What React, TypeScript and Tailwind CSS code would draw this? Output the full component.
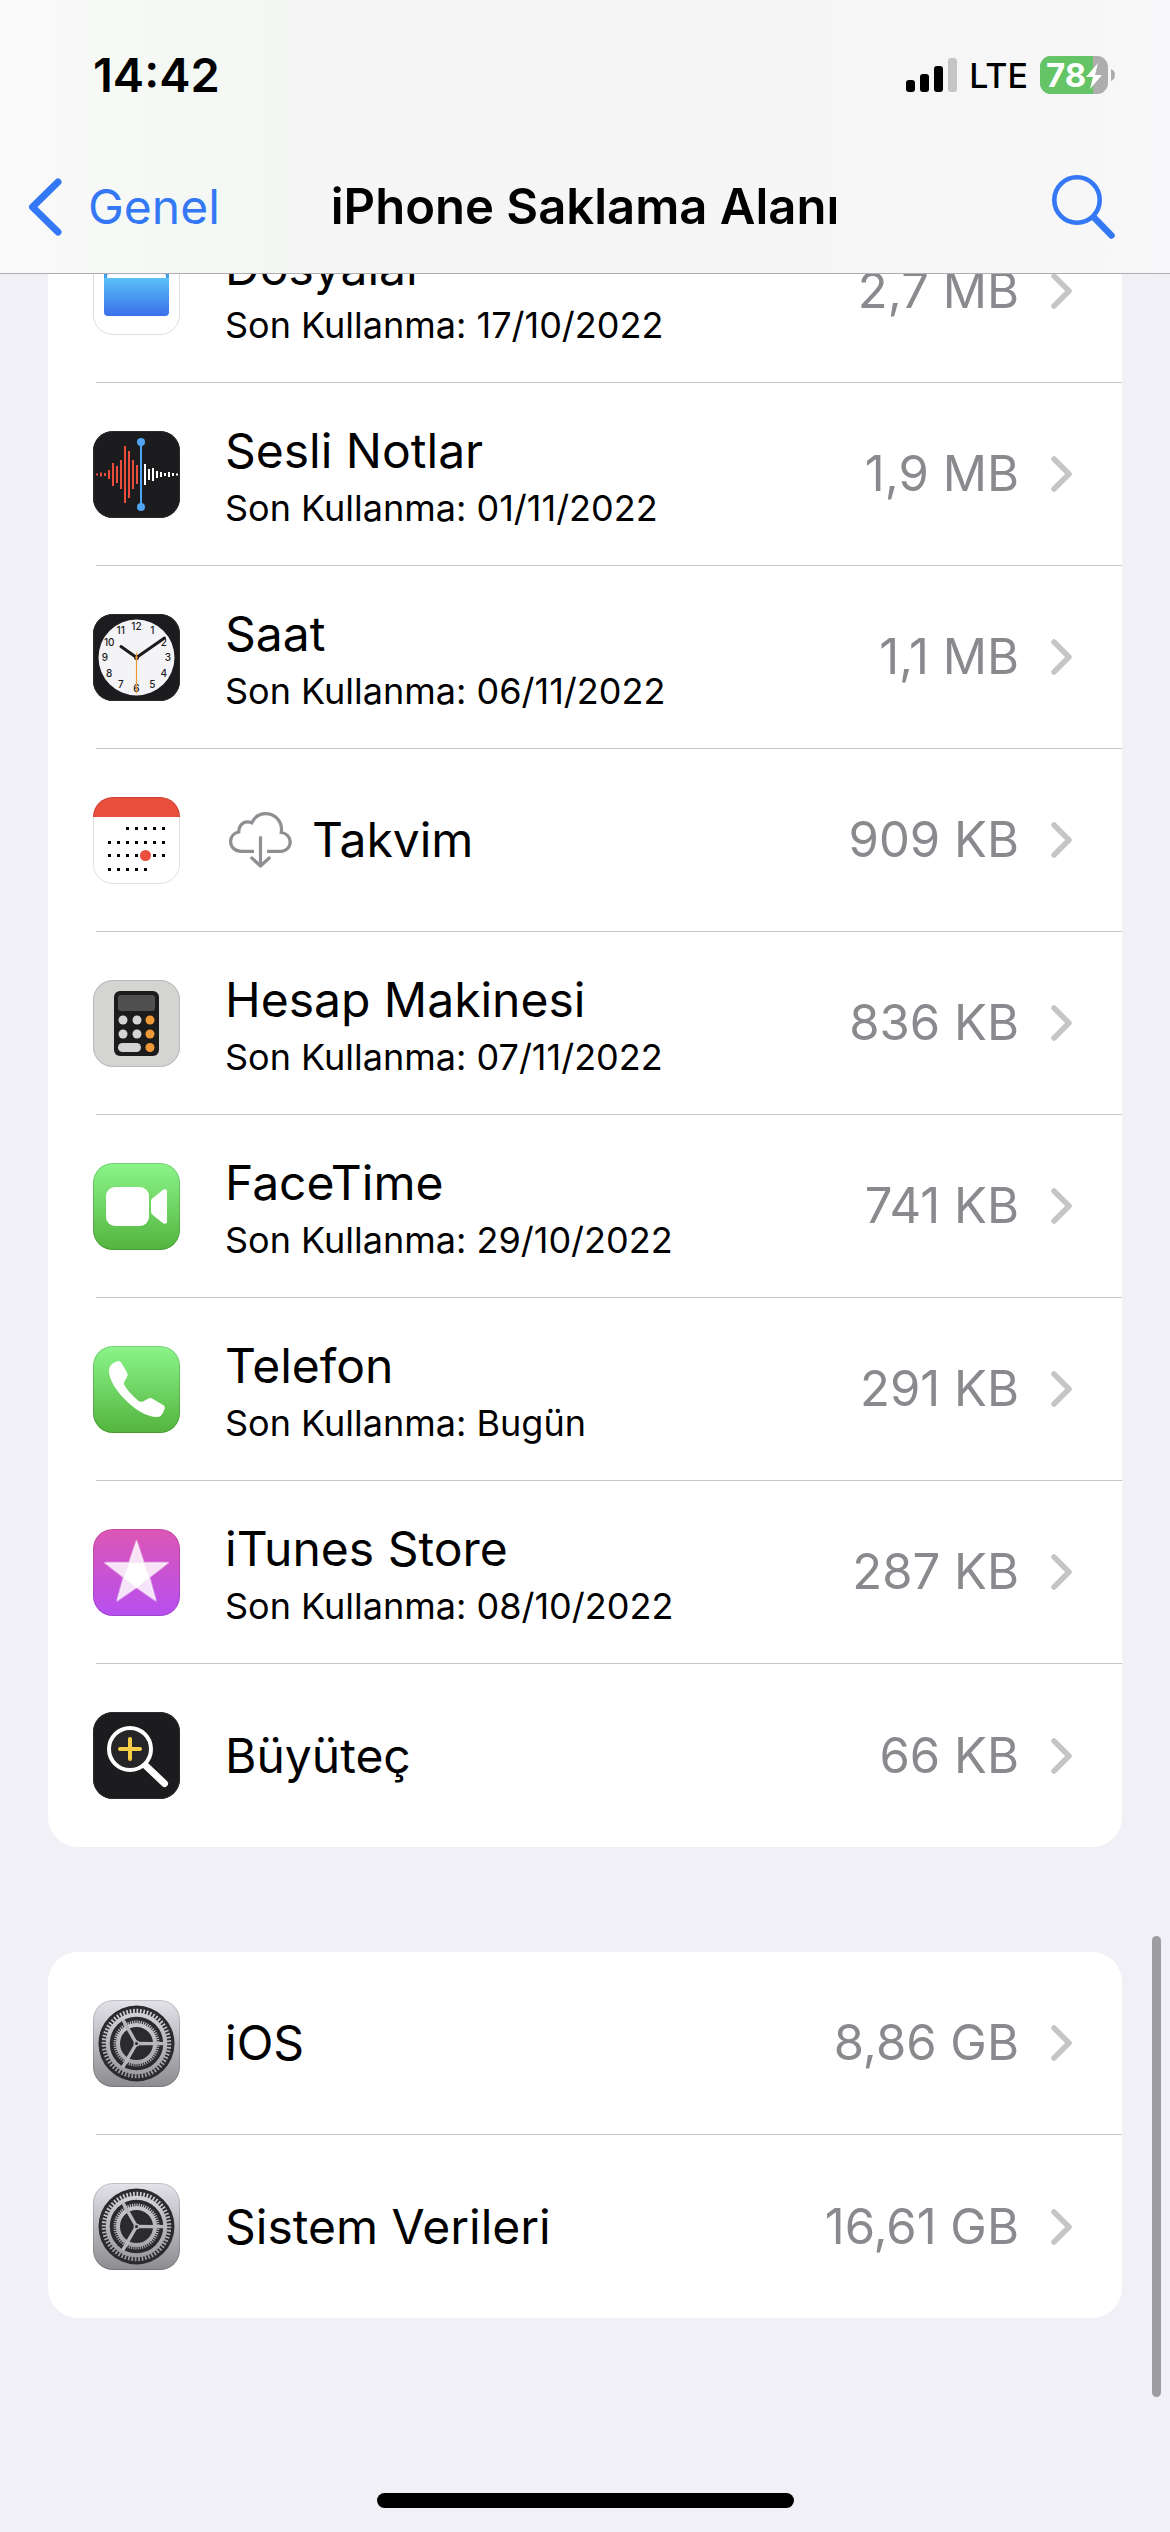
import React from "react";

type TileProps = {
  id: string;
  from: string;
  to: string;
  edge: string;
  children?: React.ReactNode;
};

type Item = {
  name: string;
  size: string;
  icon: React.ReactNode;
  used?: string;
  offloaded?: boolean;
};

const Tile = ({ children, id, from, to, edge }: TileProps) => (
  <svg viewBox="0 0 87 87" className="size-[87px] shrink-0" aria-hidden="true">
    <defs>
      <linearGradient id={`${id}-bg`} x1="0" y1="0" x2="0" y2="1">
        <stop offset="0" stopColor={from} />
        <stop offset="1" stopColor={to} />
      </linearGradient>
      <clipPath id={`${id}-clip`}>
        <rect width="87" height="87" rx="20" />
      </clipPath>
    </defs>
    <g clipPath={`url(#${id}-clip)`}>
      <rect width="87" height="87" fill={`url(#${id}-bg)`} />
      {children}
    </g>
    <rect x="0.5" y="0.5" width="86" height="86" rx="19.5" fill="none" stroke={edge} />
  </svg>
);

const FilesIcon = () => (
  <Tile id="files" from="#ffffff" to="#ffffff" edge="#dedee0">
    <defs>
      <linearGradient id="folder" x1="0" y1="0" x2="0" y2="1">
        <stop offset="0" stopColor="#5ac0f8" />
        <stop offset="1" stopColor="#3a70ea" />
      </linearGradient>
    </defs>
    <path d="M11 18h26l4 5h32a3 3 0 0 1 3 3v14H11z" fill="#3f9fe6" />
    <rect x="14" y="26" width="59" height="10" rx="2" fill="#fff" />
    <path d="M11 30h65v34a4 4 0 0 1-4 4H15a4 4 0 0 1-4-4z" fill="url(#folder)" />
  </Tile>
);

const wave = [2, 4, 3, 9, 23, 17, 29, 57, 47, 29, 19, 0, 21, 11, 13, 7, 5, 3, 5, 3, 2];

const VoiceMemosIcon = () => (
  <Tile id="memos" from="#1c1c1e" to="#1c1c1e" edge="#2a2a2c">
    {wave.map((h, i) => (
      <rect
        key={i}
        x={3 + i * 4}
        y={43.5 - h / 2}
        width="2"
        height={h}
        fill={i < 11 ? "#eb4d3d" : "#ffffff"}
      />
    ))}
    <path d="M48 11v65" stroke="#4fa4f3" strokeWidth="2" />
    <circle cx="48" cy="11" r="4" fill="#4fa4f3" />
    <circle cx="48" cy="76" r="4" fill="#4fa4f3" />
  </Tile>
);

const hours = [1, 2, 3, 4, 5, 6, 7, 8, 9, 10, 11, 12];

const ClockIcon = () => (
  <Tile id="clock" from="#1c1c1e" to="#1c1c1e" edge="#2a2a2c">
    <circle cx="43.5" cy="43.5" r="38" fill="#f4f4f6" />
    {hours.map((n) => (
      <text
        key={n}
        x={43.5 + 31.5 * Math.sin((n * Math.PI) / 6)}
        y={47 - 31 * Math.cos((n * Math.PI) / 6)}
        textAnchor="middle"
        fontSize="10"
        fontWeight="500"
        fill="#1c1c1e"
      >
        {n}
      </text>
    ))}
    <path d="M43.5 43.5 28 32.5M43.5 43.5 71.5 24" stroke="#1c1c1e" strokeWidth="3" strokeLinecap="round" />
    <circle cx="43.5" cy="43.5" r="2.5" fill="#1c1c1e" />
    <path d="M43.5 38.5v41" stroke="#f09a37" strokeWidth="1.2" />
    <circle cx="43.5" cy="43.5" r="1.3" fill="#f09a37" />
  </Tile>
);

const weeks = [
  { y: 31.5, from: 2, to: 6 },
  { y: 45.5, from: 0, to: 6 },
  { y: 58.5, from: 0, to: 6 },
  { y: 72.5, from: 0, to: 4 },
];

const CalendarIcon = () => (
  <Tile id="calendar" from="#ffffff" to="#ffffff" edge="#00000020">
    <rect width="87" height="20" fill="#ea4e3d" />
    {weeks.map((w) =>
      [0, 1, 2, 3, 4, 5, 6]
        .filter((d) => d >= w.from && d <= w.to)
        .map((d) => (
          <rect key={`${w.y}-${d}`} x={15 + d * 9} y={w.y - 1.5} width="3" height="3" fill="#000" />
        ))
    )}
    <circle cx="52.5" cy="58.5" r="5.5" fill="#ea4e3d" />
  </Tile>
);

const CalculatorIcon = () => (
  <Tile id="calculator" from="#d4d4d2" to="#d4d4d2" edge="#b9b9b8">
    <rect x="21" y="11" width="45" height="65" rx="6" fill="#1c1c1c" />
    <rect x="25" y="15" width="37" height="16" rx="3" fill="#505050" />
    {[40, 54].map((y) => (
      <g key={y} fill="#d4d4d2">
        <circle cx="30" cy={y} r="4.5" />
        <circle cx="44" cy={y} r="4.5" />
      </g>
    ))}
    {[40, 54, 67.5].map((y) => (
      <circle key={y} cx="57" cy={y} r="4.5" fill="#f09a37" />
    ))}
    <rect x="25" y="63" width="23" height="9" rx="4.5" fill="#d4d4d2" />
  </Tile>
);

const FaceTimeIcon = () => (
  <Tile id="facetime" from="#8bf58a" to="#53b43d" edge="#00000026">
    <rect x="13" y="24" width="43" height="39" rx="9" fill="#fff" />
    <path
      d="M58 38.5q0-2 1.5-3.2l9.7-7.8q1.5-1.2 3-1.2 1.8 0 1.8 2.2v30q0 2.2-1.8 2.2-1.5 0-3-1.2l-9.7-7.8q-1.5-1.2-1.5-3.2z"
      fill="#fff"
    />
  </Tile>
);

const PhoneIcon = () => (
  <Tile id="phone" from="#8bf58a" to="#53b43d" edge="#00000026">
    <path
      d="M25.5 15q1.8 0 3 2l5.5 9.500q1.200 2.300.2 4L31.5 35.500q-1.200 1.800-.2 3.600 3.500 6.500 13.600 15.500 2.600 2 5.200.8l5.400-2.900q2-1 4 .2l11 6.600q1.800 1.200 1.200 3.200-1.600 4.800-3.600 7-1.400 1.500-4.600 1.500C54 71 40.500 63 31 52.500 22 43 16 33 16 24.500q0-3.700 2.500-6 3-2.900 7-3.500z"
      fill="#fff"
    />
  </Tile>
);

const ITunesIcon = () => (
  <Tile id="itunes" from="#dc56b4" to="#b74ff0" edge="#00000020">
    <path
      d="M43.5 12 50.8 33.8H75L56.3 48.3 62.8 71.6 43.5 58.3 24.2 71.6 30.7 48.3 12 33.8H36.2z"
      fill="#fff"
      fillOpacity="0.84"
      stroke="#fff"
      strokeOpacity="0.5"
      strokeWidth="2"
      strokeLinejoin="round"
    />
    <path d="M36.2 33.8H50.8L56.3 48.8 43.5 59 30.7 48.8z" fill="#fff" />
  </Tile>
);

const MagnifierIcon = () => (
  <Tile id="magnifier" from="#1c1c1e" to="#1c1c1e" edge="#2a2a2c">
    <path d="M52 53 71.5 71.5" stroke="#fff" strokeWidth="7" strokeLinecap="round" />
    <circle cx="37" cy="37" r="21" fill="#262628" stroke="#fff" strokeWidth="4" />
    <path d="M27 37h20M37 27v20" stroke="#f7ce46" strokeWidth="4" strokeLinecap="round" />
  </Tile>
);

const SettingsIcon = ({ id }: { id: string }) => (
  <Tile id={id} from="#e4e3e9" to="#8c8b90" edge="#00000026">
    <defs>
      <linearGradient id={`${id}-gear`} gradientUnits="userSpaceOnUse" x1="0" y1="8" x2="0" y2="79">
        <stop offset="0" stopColor="#d6d5da" />
        <stop offset="1" stopColor="#99989d" />
      </linearGradient>
    </defs>
    <circle cx="43.5" cy="43.5" r="38" fill="#2b2b2d" />
    <g fill="none" stroke={`url(#${id}-gear)`}>
      <circle cx="43.5" cy="43.5" r="32.5" strokeWidth="4.5" pathLength="120" strokeDasharray="1 1" />
      <circle cx="43.5" cy="43.5" r="28.75" strokeWidth="4" />
      <circle cx="43.5" cy="43.5" r="21.5" strokeWidth="3" pathLength="120" strokeDasharray="1 1" />
      <circle cx="43.5" cy="43.5" r="18.5" strokeWidth="4" />
      {[0, 120, 240].map((a) => (
        <path
          key={a}
          d="M43.5 43.5 61 43.6M60 43.5 71 43.6"
          strokeWidth="3.4"
          transform={`rotate(${a} 43.5 43.5)`}
        />
      ))}
    </g>
    <circle cx="43.5" cy="43.5" r="3" fill="#b5b4b9" />
    <circle cx="43.5" cy="43.5" r="1.5" fill="#2b2b2d" />
  </Tile>
);

const CloudDownload = () => (
  <svg viewBox="0 0 63 56" className="mx-1 h-14 w-[63px] shrink-0" fill="none" stroke="#8e8e93" strokeWidth="3.2" aria-hidden="true">
    <path d="M25 39.3H12.5C6 39.3 1.6 35 1.6 29.5c0-4.8 3.4-8.6 8.2-9.5C9.8 14 13.5 9.8 18.5 9.8c1.7 0 3 .3 4.300 1C25.5 5 30.5 1.6 36.5 1.6c9 0 16 7 16 16 0 1 0 2-.2 2.900 5 .6 8.900 4.500 8.900 9.500 0 5.300-4.200 9.300-9.500 9.300H38" />
    <path d="M31.5 25.5v28M22.8 46l8.700 8 8.700-8" strokeLinecap="round" strokeLinejoin="round" />
  </svg>
);

const Chevron = () => (
  <svg viewBox="0 0 21 36" className="h-9 w-[21px] shrink-0" aria-hidden="true">
    <path d="M3 3 18 18 3 33" fill="none" stroke="#c5c5c7" strokeWidth="5.5" strokeLinecap="round" strokeLinejoin="round" />
  </svg>
);

const apps: Item[] = [
  { name: "Dosyalar", used: "17/10/2022", size: "2,7 MB", icon: <FilesIcon /> },
  { name: "Sesli Notlar", used: "01/11/2022", size: "1,9 MB", icon: <VoiceMemosIcon /> },
  { name: "Saat", used: "06/11/2022", size: "1,1 MB", icon: <ClockIcon /> },
  { name: "Takvim", offloaded: true, size: "909 KB", icon: <CalendarIcon /> },
  { name: "Hesap Makinesi", used: "07/11/2022", size: "836 KB", icon: <CalculatorIcon /> },
  { name: "FaceTime", used: "29/10/2022", size: "741 KB", icon: <FaceTimeIcon /> },
  { name: "Telefon", used: "Bugün", size: "291 KB", icon: <PhoneIcon /> },
  { name: "iTunes Store", used: "08/10/2022", size: "287 KB", icon: <ITunesIcon /> },
  { name: "Büyüteç", size: "66 KB", icon: <MagnifierIcon /> },
];

const system: Item[] = [
  { name: "iOS", size: "8,86 GB", icon: <SettingsIcon id="ios" /> },
  { name: "Sistem Verileri", size: "16,61 GB", icon: <SettingsIcon id="data" /> },
];

const Group = ({ items }: { items: Item[] }) => (
  <ul className="mx-12 overflow-hidden rounded-[30px] bg-white">
    {items.map((item, i) => (
      <li key={item.name} className="flex h-[183px] flex-col">
        <a href="#" className="flex flex-1 items-center pr-[50px] pl-[45px]">
          {item.icon}
          <div className="ml-[45px] flex-1">
            <div className="flex items-center text-[48px] leading-[68px]">
              {item.offloaded && (
                <span className="mr-4">
                  <CloudDownload />
                </span>
              )}
              {item.name}
            </div>
            {item.used && <p className="text-[36px] leading-[47px]">Son Kullanma: {item.used}</p>}
          </div>
          <span className="mr-8 text-[49px] text-[#8a8a8e]">{item.size}</span>
          <Chevron />
        </a>
        {i < items.length - 1 && <div className="ml-12 h-px bg-[#c6c6c8]" />}
      </li>
    ))}
  </ul>
);

const StatusBar = () => (
  <div className="flex h-[150px] items-center justify-between pr-[55px] pl-[93px]">
    <span className="text-[47px] font-semibold">14:42</span>
    <div className="flex items-center">
      <svg viewBox="0 0 51 34" className="h-[34px] w-[51px]" aria-hidden="true">
        <rect x="0" y="22" width="9" height="12" rx="3" />
        <rect x="14" y="16" width="9" height="18" rx="3" />
        <rect x="28" y="8" width="9" height="26" rx="3" />
        <rect x="42" y="0" width="9" height="34" rx="3" fill="#c5c5c6" />
      </svg>
      <span className="mx-3 text-[34px] font-medium">LTE</span>
      <svg viewBox="0 0 75 38" className="h-[38px] w-[75px]" aria-label="78%">
        <defs>
          <clipPath id="battery">
            <rect width="68" height="38" rx="11" />
          </clipPath>
        </defs>
        <g clipPath="url(#battery)">
          <rect width="68" height="38" fill="#adadae" />
          <rect width="53" height="38" fill="#65c466" />
        </g>
        <path d="M71 13q4 1.500 4 6t-4 6z" fill="#adadae" />
        <text x="6" y="31" fontSize="33" fontWeight="700" fill="#fff">
          78
        </text>
        <path d="M58 7 46 21h7l-3 12 12-14h-7z" fill="#fff" />
      </svg>
    </div>
  </div>
);

const App = () => {
  return (
    <div className="relative flex min-h-screen flex-col bg-[#f1f0f6] font-['Inter','Liberation_Sans',sans-serif] text-black">
      <header className="sticky top-0 z-10 border-b border-[#aeaeb1] bg-[linear-gradient(90deg,#fafafa_0%,#f4f8f4_16%,#f5f5f5_32%,#f6f6f6_80%,#f8f8fa_100%)]">
        <StatusBar />
        <nav className="grid h-[123px] grid-cols-[1fr_auto_1fr] items-center px-7 pb-[9px]">
          <a href="#" className="flex items-center gap-[26px] text-[48px] text-[#3478f6]">
            <svg viewBox="0 0 34 58" className="h-[58px] w-[34px]" aria-hidden="true">
              <path d="M30 4 4.5 29 30 54" fill="none" stroke="currentColor" strokeWidth="7" strokeLinecap="round" strokeLinejoin="round" />
            </svg>
            Genel
          </a>
          <h1 className="text-[49px] font-semibold">iPhone Saklama Alanı</h1>
          <button type="button" aria-label="Ara" className="justify-self-end pr-[27px] text-[#3478f6]">
            <svg viewBox="0 0 63 64" className="h-16 w-[63px]" fill="none" stroke="currentColor" strokeLinecap="round" aria-hidden="true">
              <circle cx="25" cy="25" r="22.7" strokeWidth="4.6" />
              <path d="M42.5 43 59.5 60.5" strokeWidth="6.5" />
            </svg>
          </button>
        </nav>
      </header>
      <main className="-mt-[74px] flex flex-1 flex-col gap-[105px]">
        <Group items={apps} />
        <Group items={system} />
      </main>
      <div className="absolute right-[9px] bottom-[135px] h-[461px] w-[9px] rounded-full bg-[#9d9ca1]" />
      <footer className="flex justify-center pb-6">
        <div className="h-[15px] w-[417px] rounded-full bg-black" />
      </footer>
    </div>
  );
};

export default App;
